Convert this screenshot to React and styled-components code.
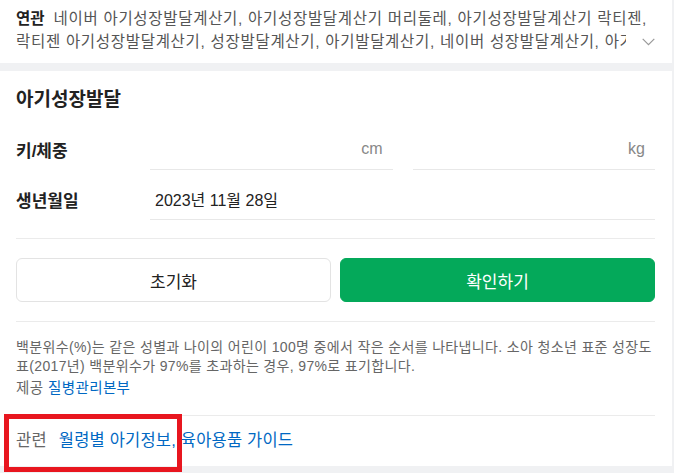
import React from "react";
import styled, { createGlobalStyle } from "styled-components";

const GlobalStyle = createGlobalStyle`
  html, body { margin: 0; padding: 0; }
  body {
    background: #f0f1f3;
    font-family: "Liberation Sans", "Noto Sans CJK KR", Arial, sans-serif;
    color: #222;
    -webkit-font-smoothing: antialiased;
  }
  * { box-sizing: border-box; }
`;

const Page = styled.div`
  position: relative;
  width: 672px;
  height: 473px;
  display: flex;
  flex-direction: column;
  gap: 8px;
`;

const RelatedBar = styled.section`
  position: relative;
  background: #fff;
  height: 63px;
  padding: 7px 16px 0 16px;
`;

const Keywords = styled.p`
  margin: 0;
  width: 632px;
  font-size: 15.5px;
  letter-spacing: 0.7px;
  line-height: 23px;
  max-height: 46px;
  overflow: hidden;
  color: #555;
`;

const KeywordLabel = styled.strong`
  display: inline-block;
  color: #222;
  font-weight: 700;
  margin-right: 9px;
  letter-spacing: 0;
`;

const MoreButton = styled.button`
  position: absolute;
  left: 626px;
  top: 30px;
  width: 46px;
  height: 23px;
  border: 0;
  padding: 0 0 0 16px;
  background: #fff;
  display: flex;
  align-items: center;
  cursor: pointer;
`;

const Card = styled.section`
  background: #fff;
  padding: 17px 17px 15px 16px;
  display: flex;
  flex-direction: column;
`;

const Title = styled.h2`
  margin: 0;
  font-size: 19px;
  line-height: 24px;
  font-weight: 700;
  color: #222;
`;

const FormRow = styled.div`
  display: grid;
  grid-template-columns: 134px 1fr;
  align-items: center;
  margin-top: ${(p) => p.$mt}px;
`;

const Label = styled.span`
  font-size: 17px;
  font-weight: 700;
  color: #222;
`;

const Fields = styled.div`
  display: flex;
  gap: 20px;
`;

const Field = styled.div`
  flex: 1;
  height: 42px;
  border-bottom: 1px solid #e8e8e8;
  display: flex;
  align-items: center;
  justify-content: ${(p) => (p.$unit ? "flex-end" : "flex-start")};
  padding: 0 10px 0 5px;
  font-size: 16px;
  color: #222;
`;

const Unit = styled.span`
  color: #888;
  font-size: 16px;
`;

const Divider = styled.hr`
  border: 0;
  border-top: 1px solid #ebebeb;
  margin: ${(p) => p.$mt}px 0 0 0;
  height: 0;
`;

const Buttons = styled.div`
  display: grid;
  grid-template-columns: 1fr 1fr;
  gap: 9px;
  margin-top: 19px;
`;

const Button = styled.button`
  height: 44px;
  border-radius: 6px;
  font-family: inherit;
  font-size: 17px;
  cursor: pointer;
  border: 1px solid ${(p) => (p.$primary ? "#04a95a" : "#e3e3e3")};
  background: ${(p) => (p.$primary ? "#04a95a" : "#fff")};
  color: ${(p) => (p.$primary ? "#fff" : "#222")};
`;

const Note = styled.p`
  margin: 16px 0 0 0;
  font-size: 14px;
  letter-spacing: 0.35px;
  line-height: 19px;
  color: #666;
  white-space: nowrap;
`;

const Source = styled.p`
  margin: 3px 0 0 0;
  font-size: 14.5px;
  letter-spacing: 0.4px;
  line-height: 19px;
  color: #666;
`;

const Link = styled.a`
  color: #0068c3;
  text-decoration: none;
`;

const RelatedLinks = styled.div`
  margin-top: 13px;
  font-size: 16.5px;
  letter-spacing: 0.2px;
  line-height: 22px;
  color: #666;
  display: flex;
  align-items: center;
`;

const RelLabel = styled.span`
  margin-right: 12px;
`;

const Highlight = styled.div`
  position: absolute;
  left: 4px;
  top: 414px;
  width: 178px;
  height: 58px;
  border: 5px solid #e8161f;
  pointer-events: none;
`;

export default function App() {
  return (
    <>
      <GlobalStyle />
      <Page>
        <RelatedBar>
          <Keywords>
            <KeywordLabel>연관</KeywordLabel>
            네이버 아기성장발달계산기, 아기성장발달계산기 머리둘레, 아기성장발달계산기 락티젠,
            락티젠 아기성장발달계산기, 성장발달계산기, 아기발달계산기, 네이버 성장발달계산기, 아기발달
          </Keywords>
          <MoreButton aria-label="더보기">
            <svg width="13" height="8" viewBox="0 0 13 8" fill="none">
              <path d="M0.7 0.9 L6.5 6.6 L12.3 0.9" stroke="#999" strokeWidth="1.2" />
            </svg>
          </MoreButton>
        </RelatedBar>
        <Card>
          <Title>아기성장발달</Title>
          <FormRow $mt={16}>
            <Label>키/체중</Label>
            <Fields>
              <Field $unit>
                <Unit>cm</Unit>
              </Field>
              <Field $unit>
                <Unit>kg</Unit>
              </Field>
            </Fields>
          </FormRow>
          <FormRow $mt={8}>
            <Label>생년월일</Label>
            <Field>2023년 11월 28일</Field>
          </FormRow>
          <Divider $mt={18} />
          <Buttons>
            <Button>초기화</Button>
            <Button $primary>확인하기</Button>
          </Buttons>
          <Divider $mt={19} />
          <Note>
            백분위수(%)는 같은 성별과 나이의 어린이 100명 중에서 작은 순서를 나타냅니다. 소아 청소년 표준 성장도
            <br />
            표(2017년) 백분위수가 97%를 초과하는 경우, 97%로 표기합니다.
          </Note>
          <Source>
            제공 <Link href="#">질병관리본부</Link>
          </Source>
          <Divider $mt={17} />
          <RelatedLinks>
            <RelLabel>관련</RelLabel>
            <Link href="#">월령별 아기정보,</Link>&nbsp;<Link href="#">육아용품 가이드</Link>
          </RelatedLinks>
        </Card>
        <Highlight />
      </Page>
    </>
  );
}
